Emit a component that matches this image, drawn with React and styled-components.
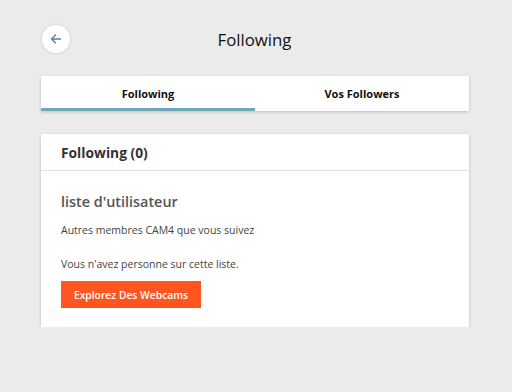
import React from 'react'
import styled, { createGlobalStyle } from 'styled-components'

const Global = createGlobalStyle`
  html, body {
    margin: 0;
    padding: 0;
    background: #ebebeb;
    font-family: "Open Sans", "Liberation Sans", sans-serif;
  }
`;

const Page = styled.div`
  width: 428px;
  margin: 0 0 0 41px;
  padding: 25px 0 0 0;
  display: flex;
  flex-direction: column;
`;

const Topbar = styled.div`
  display: flex;
  align-items: center;
  height: 28px;
  margin-left: 1px;
`;

const Backbutton = styled.button`
  width: 28px;
  height: 28px;
  border-radius: 50%;
  border: none;
  background: #fff;
  box-shadow: 0 0 3px rgba(0,0,0,.15);
  display: flex;
  align-items: center;
  justify-content: center;
  padding: 0;
  cursor: pointer;
`;

const Title = styled.h1`
  flex: 1;
  margin: 0 30px 0 0;
  text-align: center;
  font-size: 16.8px;
  font-weight: 400;
  color: #111;
`;

const Tabs = styled.div`
  display: flex;
  margin-top: 23px;
  background: #fff;
  height: 35px;
  box-shadow: 0 1px 3px rgba(0,0,0,.2);
`;

const Tab = styled.div`
  flex: 1;
  display: flex;
  align-items: center;
  justify-content: center;
  font-size: 11px;
  font-weight: 700;
  color: #111;
  border-bottom: 3px solid ${props => props.active ? '#6ea8bc' : 'transparent'};
  padding-top: 3px;
`;

const Card = styled.div`
  margin-top: 23px;
  background: #fff;
  box-shadow: 0 1px 3px rgba(0,0,0,.2);
`;

const Cardhead = styled.div`
  height: 36px;
  display: flex;
  align-items: center;
  padding: 0 20px;
  border-bottom: 1px solid #e0e0e0;
  font-size: 13.8px;
  font-weight: 700;
  color: #333;
`;

const Cardbody = styled.div`
  padding: 21px 20px 19px;
  display: flex;
  flex-direction: column;
  align-items: flex-start;
`;

const Subhead = styled.h3`
  margin: 0;
  font-size: 14.4px;
  font-weight: 600;
  color: #555;
  line-height: 20px;
`;

const Text = styled.p`
  margin: ${props => props.gap}px 0 0;
  font-size: 10.5px;
  color: #444;
  line-height: 16px;
`;

const Orangebutton = styled.button`
  margin-top: 9px;
  width: 140px;
  height: 27px;
  border: none;
  background: #ff5520;
  color: #fff;
  font-family: inherit;
  font-size: 10.3px;
  font-weight: 600;
  cursor: pointer;
`;

const Arrow = () => (
  <svg width="12" height="12" viewBox="0 0 12 12" fill="none" stroke="#5b7aa6" strokeWidth="1.3" strokeLinecap="round" strokeLinejoin="round">
    <path d="M10.5 6H1.5M5.5 2L1.5 6l4 4" />
  </svg>
);

export default function App() {
  return (
    <>
      <Global />
      <Page>
        <Topbar>
          <Backbutton><Arrow /></Backbutton>
          <Title>Following</Title>
        </Topbar>
        <Tabs>
          <Tab active>Following</Tab>
          <Tab>Vos Followers</Tab>
        </Tabs>
        <Card>
          <Cardhead>Following (0)</Cardhead>
          <Cardbody>
            <Subhead>liste d'utilisateur</Subhead>
            <Text gap={10}>Autres membres CAM4 que vous suivez</Text>
            <Text gap={18}>Vous n'avez personne sur cette liste.</Text>
            <Orangebutton>Explorez Des Webcams</Orangebutton>
          </Cardbody>
        </Card>
      </Page>
    </>
  );
}
